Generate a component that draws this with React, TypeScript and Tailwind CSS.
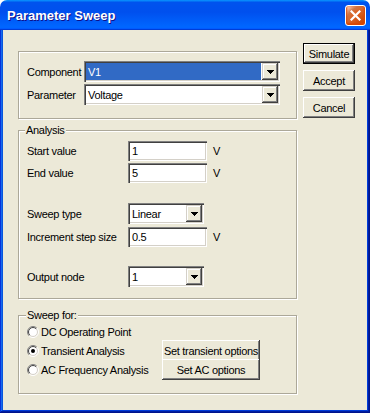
import React from "react";

const sunken =
  "bg-white shadow-[inset_1px_1px_0_#808080,inset_2px_2px_0_#404040,inset_-1px_-1px_0_#ffffff,inset_-2px_-2px_0_#d4d0c8]";
const raisedSmall =
  "bg-[#ece9d8] shadow-[inset_-1px_-1px_0_#404040,inset_1px_1px_0_#d4d0c8,inset_-2px_-2px_0_#808080,inset_2px_2px_0_#ffffff]";
const raisedBtn =
  "bg-[#ece9d8] shadow-[inset_-1px_-1px_0_#404040,inset_1px_1px_0_#ffffff,inset_-2px_-2px_0_#808080]";
const etched =
  "border border-[#aca899] shadow-[1px_1px_0_#ffffff,inset_1px_1px_0_#ffffff]";

function Tri() {
  return (
    <svg width="7" height="4" viewBox="0 0 7 4" shapeRendering="crispEdges">
      <rect x="0" y="0" width="7" height="1" fill="#000" />
      <rect x="1" y="1" width="5" height="1" fill="#000" />
      <rect x="2" y="2" width="3" height="1" fill="#000" />
      <rect x="3" y="3" width="1" height="1" fill="#000" />
    </svg>
  );
}

function Combo({ value, w, selected }: { value: string; w: string; selected?: boolean }) {
  return (
    <div className={`flex h-[21px] p-[2px] shrink-0 ${w} ${sunken}`}>
      <div
        className={`flex-1 flex items-center pl-[2px] mr-[1px] ${
          selected ? "bg-[#316ac5] text-white" : "text-black"
        }`}
      >
        {value}
      </div>
      <div className={`w-[16px] h-full flex items-center justify-center ${raisedSmall}`}>
        <Tri />
      </div>
    </div>
  );
}

function Field({ value, w }: { value: string; w: string }) {
  return (
    <div className={`flex items-center h-[20px] pl-[4px] shrink-0 ${w} ${sunken}`}>{value}</div>
  );
}

function Btn({ label, w, def }: { label: string; w: string; def?: boolean }) {
  if (def) {
    return (
      <div className={`${w} h-[21px] border border-black`}>
        <div className={`w-full h-full flex items-center justify-center ${raisedBtn}`}>{label}</div>
      </div>
    );
  }
  return (
    <div className={`${w} h-[21px] flex items-center justify-center ${raisedBtn}`}>{label}</div>
  );
}

function Radio({ checked }: { checked?: boolean }) {
  const pts = (r: number) => {
    const d = r * Math.SQRT1_2;
    return { bl: `${6 - d} ${6 + d}`, tr: `${6 + d} ${6 - d}` };
  };
  const a = pts(5.5);
  const b = pts(4.5);
  return (
    <svg width="12" height="12" viewBox="0 0 12 12" className="shrink-0">
      <circle cx="6" cy="6" r="5" fill="#ffffff" />
      <path d={`M ${a.bl} A 5.5 5.5 0 0 1 ${a.tr}`} stroke="#808080" fill="none" />
      <path d={`M ${a.tr} A 5.5 5.5 0 0 1 ${a.bl}`} stroke="#ffffff" fill="none" />
      <path d={`M ${b.bl} A 4.5 4.5 0 0 1 ${b.tr}`} stroke="#404040" fill="none" />
      <path d={`M ${b.tr} A 4.5 4.5 0 0 1 ${b.bl}`} stroke="#d4d0c8" fill="none" />
      {checked && <circle cx="6" cy="6" r="2" fill="#000000" />}
    </svg>
  );
}

function Row({ label, children }: { label: string; children: React.ReactNode }) {
  return (
    <div className="flex items-center">
      <div className="w-[101px] shrink-0">{label}</div>
      {children}
    </div>
  );
}

export default function App() {
  return (
    <div className="w-[370px] h-[413px] bg-white">
      <div className="w-[370px] h-[413px] flex flex-col whitespace-nowrap text-[11px] tracking-[-0.3px] leading-[14px] text-black font-['Liberation_Sans',Arial,sans-serif]">
        {/* Title bar */}
        <div className="h-[30px] shrink-0 flex items-center pl-[7px] pr-[4px] rounded-t-[7px] bg-[linear-gradient(180deg,#0997ff,#0053ee_8%,#0050ee_40%,#0066ff_88%,#0066ff_93%,#005bff_95%,#003dd7_96%,#003dd7)]">
          <div className="flex-1 pt-[2px] text-white font-bold text-[13px] tracking-normal [text-shadow:1px_1px_0_#0f1089]">
            Parameter Sweep
          </div>
          <div className="w-[21px] h-[21px] mt-[1px] rounded-[3px] border border-white flex items-center justify-center bg-[radial-gradient(circle_at_90%_90%,#cc4600_0%,#dc6527_55%,#cd7546_70%,#ffccb2_90%,#ffffff_100%)] shadow-[inset_0_-1px_2px_1px_#da4600]">
            <svg width="11" height="11" viewBox="0 0 11 11">
              <path d="M1.5 1.5 L9.5 9.5 M9.5 1.5 L1.5 9.5" stroke="#ffffff" strokeWidth="2.2" strokeLinecap="square" />
            </svg>
          </div>
        </div>

        {/* Frame */}
        <div className="flex flex-1 px-[3px] pb-[3px] bg-[#0855dd] shadow-[inset_-1px_-1px_0_#00138c,inset_1px_0_0_#0831d9,inset_-2px_-2px_0_#001ea0,inset_2px_0_0_#166aee,inset_-3px_-3px_0_#003bda,inset_3px_0_0_#0855dd]">
          <div className="flex items-start flex-1 bg-[#ece9d8] pl-[15px]">
            {/* Left column */}
            <div className="w-[279px] pt-[21px] flex flex-col">
              {/* Group 1 */}
              <div className={`${etched} pl-[8px] pt-[9px] pb-[13px] flex flex-col gap-[2px]`}>
                <div className="flex items-center">
                  <div className="w-[57px] shrink-0">Component</div>
                  <Combo value="V1" w="w-[196px]" selected />
                </div>
                <div className="flex items-center">
                  <div className="w-[57px] shrink-0">Parameter</div>
                  <Combo value="Voltage" w="w-[196px]" />
                </div>
              </div>

              {/* Analysis */}
              <div className={`${etched} relative mt-[11px] pl-[8px] pt-[10px] pb-[11px] flex flex-col`}>
                <div className="absolute left-[6px] top-[-8px] px-[1px] bg-[#ece9d8]">Analysis</div>
                <Row label="Start value">
                  <Field value="1" w="w-[79px]" />
                  <div className="ml-[6px]">V</div>
                </Row>
                <div className="mt-[2px]">
                  <Row label="End value">
                    <Field value="5" w="w-[79px]" />
                    <div className="ml-[6px]">V</div>
                  </Row>
                </div>
                <div className="mt-[20px]">
                  <Row label="Sweep type">
                    <Combo value="Linear" w="w-[76px]" />
                  </Row>
                </div>
                <div className="mt-[3px]">
                  <Row label="Increment step size">
                    <Field value="0.5" w="w-[79px]" />
                    <div className="ml-[6px]">V</div>
                  </Row>
                </div>
                <div className="mt-[19px]">
                  <Row label="Output node">
                    <Combo value="1" w="w-[76px]" />
                  </Row>
                </div>
              </div>

              {/* Sweep for */}
              <div className={`${etched} relative mt-[16px] pl-[8px] pt-[7px] pb-[14px]`}>
                <div className="absolute left-[7px] top-[-8px] px-[1px] bg-[#ece9d8]">Sweep for:</div>
                <div className="grid grid-cols-[135px_98px] grid-rows-[18px_19px_19px]">
                  <div className="flex items-center gap-[2px] col-span-2">
                    <Radio />
                    <span>DC Operating Point</span>
                  </div>
                  <div className="flex items-center gap-[2px]">
                    <Radio checked />
                    <span>Transient Analysis</span>
                  </div>
                  <div className="h-[19px] flex items-center justify-center">
                    <Btn label="Set transient options" w="w-[98px]" />
                  </div>
                  <div className="flex items-center gap-[2px]">
                    <Radio />
                    <span>AC Frequency Analysis</span>
                  </div>
                  <div className="h-[19px] flex items-center justify-center">
                    <Btn label="Set AC options" w="w-[98px]" />
                  </div>
                </div>
              </div>
            </div>

            {/* Right column */}
            <div className="ml-[6px] pt-[13px] flex flex-col gap-[6px]">
              <Btn label="Simulate" w="w-[52px]" def />
              <Btn label="Accept" w="w-[52px]" />
              <Btn label="Cancel" w="w-[52px]" />
            </div>
          </div>
        </div>
      </div>
    </div>
  );
}
